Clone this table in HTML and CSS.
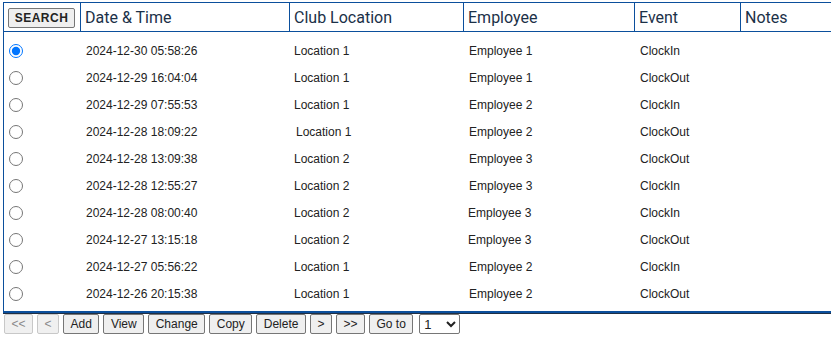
FILE: index.html
```html
<!DOCTYPE html>
<html>
<head>
<meta charset="utf-8">
<link rel="stylesheet" href="styles.css">
</head>
<body>
<div class="frame">
  <div class="head">
    <div class="hcell first"><button class="search">SEARCH</button></div>
    <div class="hcell c-date">Date &amp; Time</div>
    <div class="hcell c-loc">Club Location</div>
    <div class="hcell c-emp">Employee</div>
    <div class="hcell c-evt">Event</div>
    <div class="hcell c-notes">Notes</div>
  </div>
  <table class="rows">
    <colgroup>
      <col class="w-sel"><col class="w-date"><col class="w-loc"><col class="w-emp"><col class="w-evt"><col class="w-notes">
    </colgroup>
    <tbody>
      <tr><td class="sel"><input type="radio" name="r" checked></td><td>2024-12-30 05:58:26</td><td>Location 1</td><td>Employee 1</td><td>ClockIn</td><td></td></tr>
      <tr><td class="sel"><input type="radio" name="r"></td><td>2024-12-29 16:04:04</td><td>Location 1</td><td>Employee 1</td><td>ClockOut</td><td></td></tr>
      <tr><td class="sel"><input type="radio" name="r"></td><td>2024-12-29 07:55:53</td><td>Location 1</td><td>Employee 2</td><td>ClockIn</td><td></td></tr>
      <tr><td class="sel"><input type="radio" name="r"></td><td>2024-12-28 18:09:22</td><td class="nudge">Location 1</td><td>Employee 2</td><td>ClockOut</td><td></td></tr>
      <tr><td class="sel"><input type="radio" name="r"></td><td>2024-12-28 13:09:38</td><td>Location 2</td><td>Employee 3</td><td>ClockOut</td><td></td></tr>
      <tr><td class="sel"><input type="radio" name="r"></td><td>2024-12-28 12:55:27</td><td>Location 2</td><td>Employee 3</td><td>ClockIn</td><td></td></tr>
      <tr><td class="sel"><input type="radio" name="r"></td><td>2024-12-28 08:00:40</td><td class="back">Location 2</td><td class="back">Employee 3</td><td>ClockIn</td><td></td></tr>
      <tr><td class="sel"><input type="radio" name="r"></td><td>2024-12-27 13:15:18</td><td class="back">Location 2</td><td class="back">Employee 3</td><td>ClockOut</td><td></td></tr>
      <tr><td class="sel"><input type="radio" name="r"></td><td>2024-12-27 05:56:22</td><td class="back">Location 1</td><td>Employee 2</td><td>ClockIn</td><td></td></tr>
      <tr><td class="sel"><input type="radio" name="r"></td><td>2024-12-26 20:15:38</td><td class="back">Location 1</td><td>Employee 2</td><td>ClockOut</td><td></td></tr>
    </tbody>
  </table>
</div>
<div class="toolbar">
  <button class="btn" disabled>&lt;&lt;</button>
  <button class="btn" disabled>&lt;</button>
  <button class="btn">Add</button>
  <button class="btn">View</button>
  <button class="btn">Change</button>
  <button class="btn">Copy</button>
  <button class="btn">Delete</button>
  <button class="btn">&gt;</button>
  <button class="btn">&gt;&gt;</button>
  <button class="btn">Go to</button>
  <select class="page"><option>1</option></select>
</div>
</body>
</html>
```
FILE: styles.css
```css
html, body {
  margin: 0;
  padding: 0;
  background: #fff;
  overflow: hidden;
}
body {
  padding: 2px 0 0 3px;
  font-family: "Liberation Sans", Arial, sans-serif;
  font-size: 12px;
  color: #222;
  width: 828px;
}
.frame {
  border-top: 1px solid #0b4f9c;
  border-left: 1px solid #0b4f9c;
  border-bottom: 2px solid #0b4f9c;
  box-shadow: 0 1px 0 #1f2f44;
  padding-bottom: 4px;
  overflow: hidden;
}
.head {
  display: flex;
  height: 28px;
  border-bottom: 1px solid #0b4f9c;
}
.hcell {
  flex: none;
  font-family: Roboto, "Liberation Sans", sans-serif;
  font-size: 16px;
  color: #1b3148;
  padding: 5px 0 0 4px;
  box-sizing: border-box;
  border-right: 1px solid #0b4f9c;
  height: 28px;
}
.hcell.first { width: 77px; padding: 4px 0 0 4px; }
.c-date { width: 209px; }
.c-loc { width: 174px; }
.c-emp { width: 171px; }
.c-evt { width: 106px; }
.c-notes { width: 160px; border-right: none; }
.search {
  font-family: "Liberation Sans", Arial, sans-serif;
  font-weight: bold;
  font-size: 12px;
  letter-spacing: 0.5px;
  color: #222;
  height: 20px;
  width: 67px;
  padding: 0;
  background: #efefef;
  border: 1px solid #767676;
  border-radius: 2px;
}
.rows {
  border-collapse: collapse;
  table-layout: fixed;
  width: 901px;
  margin-top: 5px;
}
.w-sel { width: 82px; }
.w-date { width: 208px; }
.w-loc { width: 174px; }
.w-emp { width: 171px; }
.w-evt { width: 106px; }
.w-notes { width: 160px; }
.rows td {
  height: 27px;
  padding: 0 0 0 1px;
  vertical-align: middle;
  white-space: nowrap;
  box-sizing: border-box;
}
.rows td:nth-child(2),
.rows td:nth-child(3) { padding-left: 0; }
.rows td.nudge { padding-left: 2px; }
.rows td.back { padding-left: 0; }
.rows td.sel { padding: 1px 0 0 0; }
.sel input {
  margin: 0 0 0 5px;
  width: 14px;
  height: 14px;
  vertical-align: middle;
}
.toolbar {
  display: flex;
  gap: 4px;
  margin-top: 1px;
  margin-left: 1px;
  align-items: center;
}
.btn {
  font-family: "Liberation Sans", Arial, sans-serif;
  font-size: 12px;
  height: 20px;
  padding: 0 6.5px;
  color: #222;
  background: #efefef;
  border: 1px solid #767676;
  border-radius: 2px;
}
.btn:disabled {
  color: #8a8a8a;
  border-color: #c8c8c8;
  background: #f0f0f0;
}
.page {
  font-family: "Liberation Sans", Arial, sans-serif;
  font-size: 13px;
  height: 20px;
  width: 41px;
  margin-left: 2px;
  border: 1px solid #767676;
  border-radius: 2px;
  background: #fff;
  color: #222;
}
```
